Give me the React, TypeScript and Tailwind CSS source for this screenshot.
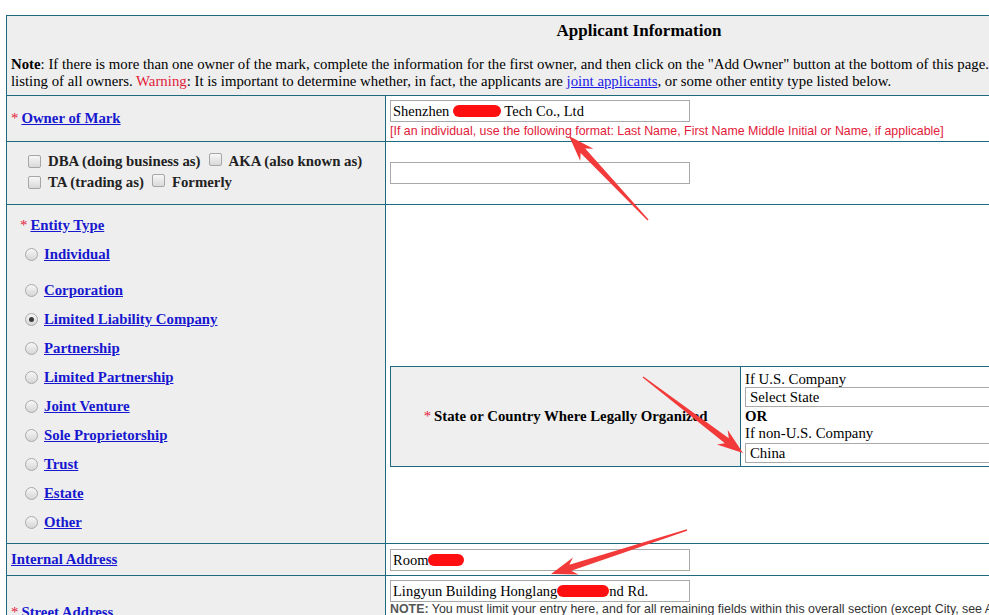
import React from 'react';

const BORDER = 'border-[#1d6a7e]';

function Check() {
  return (
    <span className="inline-block w-[13px] h-[13px] rounded-[2px] border border-[#a6a6a6] bg-gradient-to-b from-[#f7f7f7] to-[#d9d9d9] shrink-0" />
  );
}

function Radio({ on = false }: { on?: boolean }) {
  return (
    <span className="inline-flex items-center justify-center w-[13px] h-[13px] rounded-full border border-[#a9a9a9] bg-gradient-to-b from-[#f7f7f7] to-[#d6d6d6] shrink-0">
      {on && <span className="w-[5px] h-[5px] rounded-full bg-[#3a3a3a]" />}
    </span>
  );
}

function Blob({ w }: { w: number }) {
  return (
    <span
      className="inline-block h-[12px] rounded-full bg-[#ff0f0f] align-middle -mt-[3px]"
      style={{ width: w }}
    />
  );
}

function Field({ children }: { children?: React.ReactNode }) {
  return (
    <div className="w-[300px] h-[22px] border border-[#a9a9a9] bg-white pl-[2px] leading-[20px] text-[14.5px] whitespace-nowrap overflow-hidden">
      {children}
    </div>
  );
}

function Star() {
  return <span className="text-[#e2203a] font-normal mr-[3px]">*</span>;
}

function LinkB({ children }: { children: React.ReactNode }) {
  return <span className="font-bold underline text-[#1717cf]">{children}</span>;
}

// annotation arrow drawn over the shot
function arrow(tx: number, ty: number, hx: number, hy: number) {
  const dx = hx - tx;
  const dy = hy - ty;
  const L = Math.hypot(dx, dy);
  const ux = dx / L;
  const uy = dy / L;
  const nx = -uy;
  const ny = ux;
  const hl = 26;
  const bx = hx - ux * hl;
  const by = hy - uy * hl;
  const nkx = hx - ux * hl * 0.78;
  const nky = hy - uy * hl * 0.78;
  const p = (x: number, y: number) => `${x.toFixed(1)},${y.toFixed(1)}`;
  return [
    p(tx + nx * 0.7, ty + ny * 0.7),
    p(nkx + nx * 3.2, nky + ny * 3.2),
    p(bx + nx * 9, by + ny * 9),
    p(hx, hy),
    p(bx - nx * 9, by - ny * 9),
    p(nkx - nx * 3.2, nky - ny * 3.2),
    p(tx - nx * 0.7, ty - ny * 0.7),
  ].join(' ');
}

const entities = [
  'Corporation',
  'Limited Liability Company',
  'Partnership',
  'Limited Partnership',
  'Joint Venture',
  'Sole Proprietorship',
  'Trust',
  'Estate',
  'Other',
];

export default function App() {
  return (
    <div className="relative w-[989px] h-[615px] overflow-hidden bg-white text-black text-[14.8px] font-['Liberation_Serif','Times_New_Roman',serif]">
      <div className="pl-[6px] pt-[15px]">
        <div className={`w-[1266px] border ${BORDER} bg-[#eeeeee]`}>
          {/* header */}
          <div className="h-[79px] px-[4px]">
            <div className="pt-[5px] text-center text-[17px] leading-[19px] font-bold">Applicant Information</div>
            <div className="mt-[16px] leading-[17px] whitespace-nowrap">
              <div>
                <b>Note</b>: If there is more than one owner of the mark, complete the information for the first owner, and then click on the "Add Owner" button at the bottom of this page.
              </div>
              <div>
                listing of all owners. <span className="text-[#e2203a]">Warning</span>: It is important to determine whether, in fact, the applicants are{' '}
                <span className="underline text-[#1a1ae6]">joint applicants</span>, or some other entity type listed below.
              </div>
            </div>
          </div>

          {/* owner of mark */}
          <div className={`h-[46px] border-t ${BORDER} grid grid-cols-[379px_1fr]`}>
            <div className={`border-r ${BORDER} flex items-center pl-[4px]`}>
              <Star />
              <LinkB>Owner of Mark</LinkB>
            </div>
            <div className="bg-white pl-[4px] pt-[4px]">
              <Field>
                Shenzhen <Blob w={48} /> Tech Co., Ltd
              </Field>
              <div className="mt-[1px] text-[#e2203a] text-[12.4px] leading-[16px] whitespace-nowrap font-['Liberation_Sans',Arial,sans-serif]">
                [If an individual, use the following format: Last Name, First Name Middle Initial or Name, if applicable]
              </div>
            </div>
          </div>

          {/* dba / aka */}
          <div className={`h-[63px] border-t ${BORDER} grid grid-cols-[379px_1fr]`}>
            <div className={`border-r ${BORDER} flex flex-col justify-center pl-[21px] pb-[2px] font-bold text-[#222] leading-[21px]`}>
              <div className="flex items-center">
                <Check />
                <span className="ml-[7px]">DBA (doing business as)</span>
                <span className="ml-[8px]"><Check /></span>
                <span className="ml-[7px]">AKA (also known as)</span>
              </div>
              <div className="flex items-center">
                <Check />
                <span className="ml-[7px]">TA (trading as)</span>
                <span className="ml-[8px]"><Check /></span>
                <span className="ml-[7px]">Formerly</span>
              </div>
            </div>
            <div className="bg-white pl-[4px] flex items-center">
              <Field />
            </div>
          </div>

          {/* entity type */}
          <div className={`h-[339px] border-t ${BORDER} grid grid-cols-[379px_1fr]`}>
            <div className={`border-r ${BORDER} pl-[13px] pt-[11px]`}>
              <div className="leading-[18px]">
                <Star />
                <LinkB>Entity Type</LinkB>
              </div>
              <div className="pl-[5px] mt-[11px] flex items-center h-[18px]">
                <Radio />
                <span className="ml-[6px]"><LinkB>Individual</LinkB></span>
              </div>
              <div className="pl-[5px] mt-[18px] flex flex-col gap-[11px]">
                {entities.map((e) => (
                  <div key={e} className="flex items-center h-[18px]">
                    <Radio on={e === 'Limited Liability Company'} />
                    <span className="ml-[6px]"><LinkB>{e}</LinkB></span>
                  </div>
                ))}
              </div>
            </div>
            <div className="bg-white pl-[4px] pr-[4px] pt-[161px]">
              <div className={`border ${BORDER} grid grid-cols-[350px_1fr] h-[101px]`}>
                <div className={`bg-[#efefef] border-r ${BORDER} flex items-center justify-center font-bold`}>
                  <Star />
                  State or Country Where Legally Organized
                </div>
                <div className="bg-white pl-[4px] pt-[4px] leading-[16px]">
                  <div>If U.S. Company</div>
                  <div className="h-[20px] border border-[#a9a9a9] pl-[4px] leading-[18px]">Select State</div>
                  <div className="font-bold mt-[1px]">OR</div>
                  <div className="mt-[1px]">If non-U.S. Company</div>
                  <div className="h-[20px] mt-[2px] border border-[#a9a9a9] pl-[4px] leading-[18px]">China</div>
                </div>
              </div>
            </div>
          </div>

          {/* internal address */}
          <div className={`h-[32px] border-t ${BORDER} grid grid-cols-[379px_1fr]`}>
            <div className={`border-r ${BORDER} flex items-center pl-[4px]`}>
              <LinkB>Internal Address</LinkB>
            </div>
            <div className="bg-white pl-[4px] flex items-center">
              <Field>
                Room<Blob w={36} />
              </Field>
            </div>
          </div>

          {/* street address */}
          <div className={`h-[80px] border-t ${BORDER} grid grid-cols-[379px_1fr]`}>
            <div className={`border-r ${BORDER} pl-[4px] pt-[25px]`}>
              <Star />
              <LinkB>Street Address</LinkB>
            </div>
            <div className="bg-white pl-[4px] pt-[4px]">
              <Field>
                Lingyun Building Honglang<Blob w={52} />nd Rd.
              </Field>
              <div className="text-[12.4px] leading-[15px] whitespace-nowrap text-[#333] font-['Liberation_Sans',Arial,sans-serif]">
                <b className="text-[#555]">NOTE:</b> You must limit your entry here, and for all remaining fields within this overall section (except City, see Additional Note below)
              </div>
            </div>
          </div>
        </div>
      </div>

      <svg className="absolute inset-0 pointer-events-none" width="989" height="615">
        <polygon points={arrow(648, 220, 569, 136)} fill="#f23a3a" />
        <polygon points={arrow(643, 377, 743, 453)} fill="#f23a3a" />
        <polygon points={arrow(687, 530, 551, 574)} fill="#f23a3a" />
      </svg>
    </div>
  );
}
